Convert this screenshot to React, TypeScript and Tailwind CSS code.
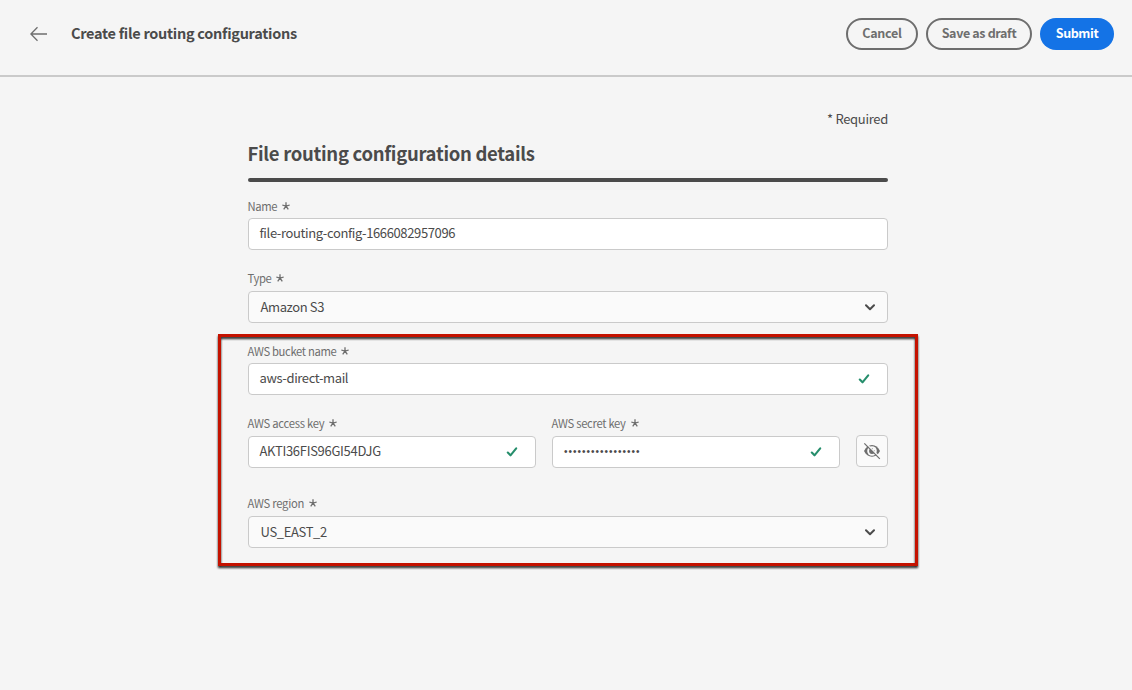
import type { ReactNode } from "react";

function Asterisk() {
  return (
    <svg className="ml-[5px] size-2 shrink-0" viewBox="0 0 8 8" fill="none" stroke="#6e6e6e" strokeWidth="1.300">
      <path d="M4 4.200V.2M4 4.200L.3 3M4 4.200L1.700 7.400M4 4.200l2.300 3.200M4 4.200L7.700 3" />
    </svg>
  );
}

function Label({ children, className }: { children: string; className: string }) {
  return (
    <div className="-ml-[0.5px] flex h-4 items-center">
      <span className={`pb-px whitespace-nowrap text-[11.25px] leading-4 text-[#6e6e6e] ${className}`}>{children}</span>
      <Asterisk />
    </div>
  );
}

function Box({ children, picker = false }: { children: ReactNode; picker?: boolean }) {
  return (
    <div
      className={`flex h-8 w-full items-center justify-between rounded border border-[#cacaca] text-[13px] leading-5 whitespace-nowrap text-[#4b4b4b] ${
        picker ? "bg-[#fafafa] pr-3 pl-[11.5px]" : "bg-white pr-[17px] pl-[10.5px]"
      }`}
    >
      {children}
    </div>
  );
}

function Check() {
  return (
    <svg className="mb-px h-[10px] w-3" viewBox="0 0 12 10" fill="none" stroke="#268e6c" strokeWidth="2.100" strokeLinecap="round" strokeLinejoin="round">
      <path d="M1.800 5.500L4.500 8.300L10.200 1.400" />
    </svg>
  );
}

function Chevron() {
  return (
    <svg className="h-[7px] w-[10px]" viewBox="0 0 10 7" fill="none" stroke="#4b4b4b" strokeWidth="2" strokeLinecap="round" strokeLinejoin="round">
      <path d="M1 1.200L5 5.200L9 1.200" />
    </svg>
  );
}

function HiddenEye() {
  return (
    <svg className="size-[18px]" viewBox="0 0 18 18" fill="none">
      <path d="M1 9C2.800 5.300 5.600 3.100 9 3.100s6.200 2.200 8 5.900C15.200 12.700 12.400 14.700 9 14.700S2.800 12.700 1 9Z" fill="#6e6e6e" />
      <circle cx="9" cy="9" r="4.800" fill="#fafafa" />
      <path d="M9 6.200a2.900 2.900 0 1 0 2.900 2.900c0-.3 0-.5-.1-.8a1.500 1.500 0 0 1-2-2A3 3 0 0 0 9 6.200Z" fill="#6e6e6e" />
      <path d="M2.300 .700L17.800 16.200" stroke="#fafafa" strokeWidth="1.300" />
      <path d="M1.300 1.300L16.800 16.800" stroke="#6e6e6e" strokeWidth="1.200" />
    </svg>
  );
}

export default function App() {
  return (
    <div className="flex h-[690px] w-[1132px] flex-col overflow-hidden bg-[#f5f5f5] font-['Noto_Sans_CJK_SC','Noto_Sans',sans-serif] text-[#4b4b4b]">
      <header className="flex h-[77px] shrink-0 items-start border-b-2 border-[#cacaca] pt-[18px] pr-[18px] pl-[30px]">
        <div className="flex h-8 flex-1 items-center">
          <svg className="h-4 w-[17px]" viewBox="0 0 17 16" fill="none" stroke="#6e6e6e" strokeWidth="1.300">
            <path d="M7.500 1.300L.900 8L7.500 14.700M1 8H17" />
          </svg>
          <h1 className="ml-6 pb-0.5 text-[14.5px] leading-5 font-bold whitespace-nowrap tracking-[-0.285px]">Create file routing configurations</h1>
        </div>
        <div className="flex gap-2 text-[12.5px] leading-5 font-bold whitespace-nowrap">
          <button className="flex h-8 w-[72px] items-center justify-center rounded-full border-2 border-[#6e6e6e] pb-0.5 text-[#6e6e6e] tracking-[-0.25px]">Cancel</button>
          <button className="flex h-8 w-[106px] items-center justify-center rounded-full border-2 border-[#6e6e6e] pb-0.5 text-[#6e6e6e] tracking-[-0.35px]">Save as draft</button>
          <button className="flex h-8 w-[74px] items-center justify-center rounded-full bg-[#1473e6] pb-0.5 text-white tracking-[-0.4px]">Submit</button>
        </div>
      </header>

      <main className="mx-auto flex w-[640px] translate-x-[2px] flex-col pt-8">
        <div className="self-end text-[13px] leading-5 whitespace-nowrap tracking-[-0.3px]">* Required</div>
        <h2 className="mt-3 -ml-[0.5px] text-[18.5px] leading-6 font-bold whitespace-nowrap tracking-[-0.3px]">File routing configuration details</h2>
        <div className="mt-[13px] h-1 rounded-full bg-[#4b4b4b]" />

        <div className="mt-4 flex flex-col gap-1">
          <Label className="tracking-[-0.35px]">Name</Label>
          <Box>
            <span className="pb-0.5 tracking-[-0.37px]">file-routing-config-1666082957096</span>
          </Box>
        </div>

        <div className="mt-5 flex flex-col gap-[5px]">
          <Label className="tracking-[-0.4px]">Type</Label>
          <Box picker>
            <span className="tracking-[-0.38px]">Amazon S3</span>
            <Chevron />
          </Box>
        </div>

        <section className="relative -mx-[30px] mt-[11px] flex h-[232px] flex-col px-[30px] pt-[9px]">
          <div className="pointer-events-none absolute inset-0 border-[3px] border-[#c41200] drop-shadow-[0_2px_1px_rgba(0,0,0,0.85)]" />
          <div className="flex flex-col gap-1">
            <Label className="tracking-[-0.35px]">AWS bucket name</Label>
            <Box>
              <span className="pb-0.5 tracking-[-0.38px]">aws-direct-mail</span>
              <Check />
            </Box>
          </div>
          <div className="mt-5 flex gap-4">
            <div className="flex w-72 flex-col gap-[5px]">
              <Label className="tracking-[-0.27px]">AWS access key</Label>
              <Box>
                <span className="pb-0.5 tracking-[-0.3px]">AKTI36FIS96GI54DJG</span>
                <Check />
              </Box>
            </div>
            <div className="flex w-72 flex-col gap-[5px]">
              <Label className="tracking-[-0.3px]">AWS secret key</Label>
              <Box>
                <span className="pl-[0.5px] font-['Liberation_Sans'] text-[10px] tracking-[1px]">•••••••••••••••••</span>
                <Check />
              </Box>
            </div>
            <button className="mt-5 flex size-8 items-center justify-center rounded border border-[#cacaca] bg-[#fafafa]">
              <HiddenEye />
            </button>
          </div>
          <div className="mt-[27px] flex flex-col gap-[5px]">
            <Label className="tracking-[-0.27px]">AWS region</Label>
            <Box picker>
              <span className="tracking-[-0.35px]">US_EAST_2</span>
              <Chevron />
            </Box>
          </div>
        </section>
      </main>
    </div>
  );
}
